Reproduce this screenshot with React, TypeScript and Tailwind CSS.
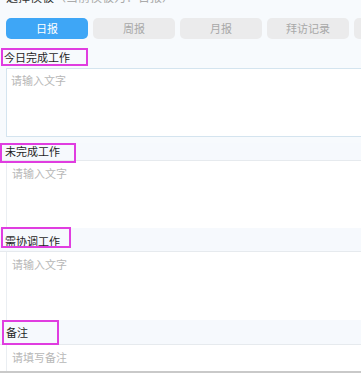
import React from "react";

const font = { fontFamily: '"Noto Sans CJK SC", "Noto Sans", sans-serif' };

function Band({
  label,
  h,
  box,
  textTop,
  textLeft,
}: {
  label: string;
  h: number;
  box: { left: number; top: number; w: number; h: number };
  textTop: number;
  textLeft: number;
}) {
  return (
    <div className="relative bg-[#f6f9fd]" style={{ height: h }}>
      <div
        className="absolute text-[11px] leading-[14px] text-[#1f1f1f]"
        style={{ top: textTop, left: textLeft }}
      >
        {label}
      </div>
      <div
        className="absolute z-10 border-2 border-[#e03de0]"
        style={{ left: box.left, top: box.top, width: box.w, height: box.h }}
      />
    </div>
  );
}

function WhiteArea({ h, text, top = true }: { h: number; text: string; top?: boolean }) {
  return (
    <div
      className={
        "bg-white " + (top ? "border-t border-[#e6eaee]" : "")
      }
      style={{ height: h }}
    >
      <div className="ml-[6px] h-full border-l border-[#eaeef2] pl-[5px] pt-[5px] text-[11px] leading-[14px] text-[#b7b7b7]">
        {text}
      </div>
    </div>
  );
}

export default function App() {
  const tabs = ["日报", "周报", "月报", "拜访记录", "其他"];
  return (
    <div className="relative w-[361px] h-[373px] overflow-hidden bg-[#f7fafd]" style={font}>
      <div className="-mt-[11px] h-[16px] pl-[6px] text-[12px] leading-[16px] whitespace-nowrap">
        <span className="text-[#333]">选择模板</span>
        <span className="text-[#aaa]">（当前模板为：日报）</span>
      </div>
      <div className="mt-[13px] flex gap-[5px] pl-[6px]">
        {tabs.map((t, i) => (
          <div
            key={t}
            className={
              "flex h-[21px] w-[82px] shrink-0 items-center justify-center rounded-[5px] text-[11px] " +
              (i === 0 ? "bg-[#3ea6f6] text-white" : "bg-[#ebebec] text-[#a8a8a8]")
            }
          >
            {t}
          </div>
        ))}
      </div>

      {/* Section 1 */}
      <div className="mt-[9px] relative h-[18px]">
        <div className="absolute left-[4px] top-[2px] text-[11px] leading-[14px] text-[#1f1f1f]">今日完成工作</div>
        <div className="absolute left-[1px] top-0 h-[18px] w-[87px] border-2 border-[#e03de0]" />
      </div>
      <div className="mt-[2px] ml-[6px] -mr-[4px] h-[69px] border border-[#d4e4ef] bg-white pl-[4px] pt-[4px] text-[11px] leading-[14px] text-[#b7b7b7]">
        请输入文字
      </div>

      {/* Section 2 */}
      <div className="mt-[6px]">
        <Band label="未完成工作" h={17} textTop={1} textLeft={5} box={{ left: 0, top: 0, w: 76, h: 20 }} />
        <WhiteArea h={68} text="请输入文字" />
      </div>

      {/* Section 3 */}
      <div>
        <Band label="需协调工作" h={23} textTop={6} textLeft={5} box={{ left: 1, top: -1, w: 70, h: 21 }} />
        <WhiteArea h={69} text="请输入文字" />
      </div>

      {/* Section 4 */}
      <div>
        <Band label="备注" h={24} textTop={5} textLeft={6} box={{ left: 2, top: 0, w: 57, h: 25 }} />
        <WhiteArea h={27} text="请填写备注" />
      </div>
      <div className="absolute bottom-0 left-0 h-[2px] w-full bg-[#c9c9c9]" />
    </div>
  );
}
